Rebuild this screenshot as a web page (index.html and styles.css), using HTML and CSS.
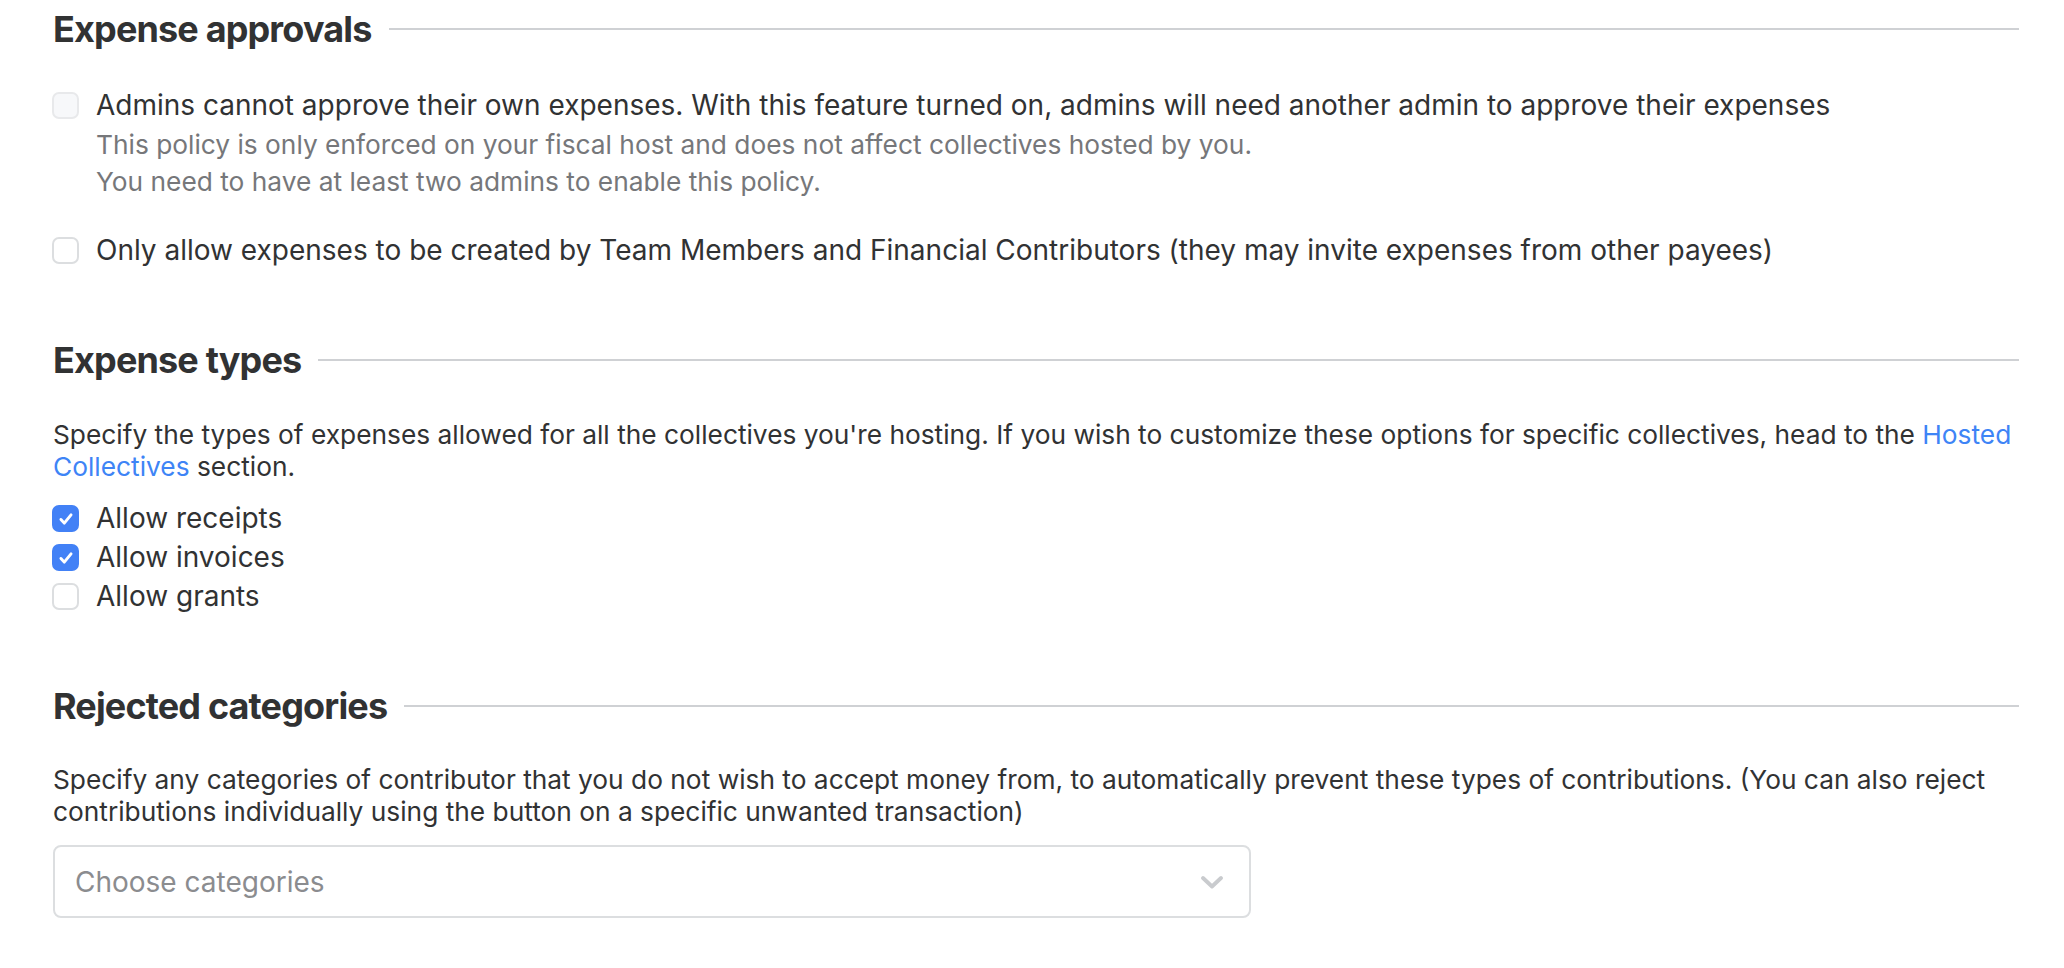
FILE: index.html
```html
<!DOCTYPE html>
<html lang="en">
<head>
<meta charset="utf-8">
<title>Expense settings</title>
<link rel="stylesheet" href="styles.css">
</head>
<body>
<div class="page">
  <section class="section">
    <div class="section-head">
      <h2 class="section-title">Expense approvals</h2>
      <div class="section-rule"></div>
    </div>
    <div class="option option-first">
      <span class="box box-disabled"></span>
      <div class="option-text">
        <div class="option-label">Admins cannot approve their own expenses. With this feature turned on, admins will need another admin to approve their expenses</div>
        <div class="option-helps">
          <div class="option-help">This policy is only enforced on your fiscal host and does not affect collectives hosted by you.</div>
          <div class="option-help">You need to have at least two admins to enable this policy.</div>
        </div>
      </div>
    </div>
    <div class="option option-second">
      <span class="box"></span>
      <div class="option-text">
        <div class="option-label">Only allow expenses to be created by Team Members and Financial Contributors (they may invite expenses from other payees)</div>
      </div>
    </div>
  </section>

  <section class="section section-types">
    <div class="section-head">
      <h2 class="section-title">Expense types</h2>
      <div class="section-rule"></div>
    </div>
    <p class="desc">Specify the types of expenses allowed for all the collectives you're hosting. If you wish to customize these options for specific collectives, head to the <a class="link" href="#">Hosted Collectives</a> section.</p>
    <div class="type-list">
      <div class="type-row">
        <span class="box box-checked"><svg viewBox="0 0 24 24" class="tick"><path d="M6.5 12.5l3.6 4 7.4-9" fill="none" stroke="#fff" stroke-width="3.2" stroke-linecap="round" stroke-linejoin="round"/></svg></span>
        <span class="type-label">Allow receipts</span>
      </div>
      <div class="type-row">
        <span class="box box-checked"><svg viewBox="0 0 24 24" class="tick"><path d="M6.5 12.5l3.6 4 7.4-9" fill="none" stroke="#fff" stroke-width="3.2" stroke-linecap="round" stroke-linejoin="round"/></svg></span>
        <span class="type-label">Allow invoices</span>
      </div>
      <div class="type-row">
        <span class="box"></span>
        <span class="type-label">Allow grants</span>
      </div>
    </div>
  </section>

  <section class="section section-rejected">
    <div class="section-head">
      <h2 class="section-title">Rejected categories</h2>
      <div class="section-rule"></div>
    </div>
    <p class="desc">Specify any categories of contributor that you do not wish to accept money from, to automatically prevent these types of contributions. (You can also reject contributions individually using the button on a specific unwanted transaction)</p>
    <div class="select">
      <span class="select-placeholder">Choose categories</span>
      <svg class="chevron" viewBox="0 0 24 14"><path d="M3 3l9 8.5 9-8.5" fill="none" stroke="#c9cbce" stroke-width="3.8" stroke-linecap="round" stroke-linejoin="round"/></svg>
    </div>
  </section>
</div>
</body>
</html>
```

FILE: styles.css
```css
* { box-sizing: border-box; }
html, body { margin: 0; padding: 0; background: #fff; }
body {
  font-family: Inter, "Noto Sans", sans-serif;
  color: #313233;
  font-size: 28px;
}
.page {
  padding: 7px 45px 0 53px;
}
.section-head {
  display: flex;
  align-items: center;
  gap: 17px;
  height: 44px;
}
.section-title {
  margin: 0;
  font-size: 36px;
  font-weight: 700;
  line-height: 44px;
  letter-spacing: -0.85px;
  color: #313233;
  white-space: nowrap;
}
.section-rule {
  flex: 1;
  height: 2px;
  background: #cfd1d4;
}
.option {
  display: flex;
  align-items: flex-start;
  gap: 17px;
}
.option-first { margin-top: 35px; }
.option-second { margin-top: 31px; }
.option .box { margin-top: 6px; margin-left: -1px; }
.option-label { line-height: 38px; }
.option-helps { margin-top: 2px; }
.option-help { font-size: 26.3px; line-height: 37px; color: #76777a; }
.box {
  flex: none;
  display: inline-flex;
  align-items: center;
  justify-content: center;
  width: 27px;
  height: 27px;
  border: 2px solid #dcdee0;
  border-radius: 7px;
  background: #fff;
}
.box-disabled {
  background: #f7f8fa;
  border-color: #e8e9eb;
}
.box-checked {
  background: #4281f6;
  border-color: #4281f6;
}
.tick { width: 22px; height: 22px; }
.section-types { margin-top: 69px; }
.section-rejected { margin-top: 68px; }
.desc {
  margin: 37px 0 0;
  font-size: 26.3px;
  line-height: 32px;
}
.section-rejected .desc { margin-top: 36px; }
.link { color: #3e84f6; text-decoration: none; }
.type-list { margin-top: 16px; }
.type-row {
  display: flex;
  align-items: center;
  gap: 17px;
  height: 39px;
}
.type-row .box { margin-left: -1px; }
.type-label { line-height: 39px; }
.select {
  margin-top: 17px;
  width: 1198px;
  height: 73px;
  border: 2px solid #dcdee0;
  border-radius: 8px;
  display: flex;
  align-items: center;
  justify-content: space-between;
  padding: 0 25px 0 20px;
}
.select-placeholder { color: #8b8c8f; }
.chevron { width: 24px; height: 14px; }
```
